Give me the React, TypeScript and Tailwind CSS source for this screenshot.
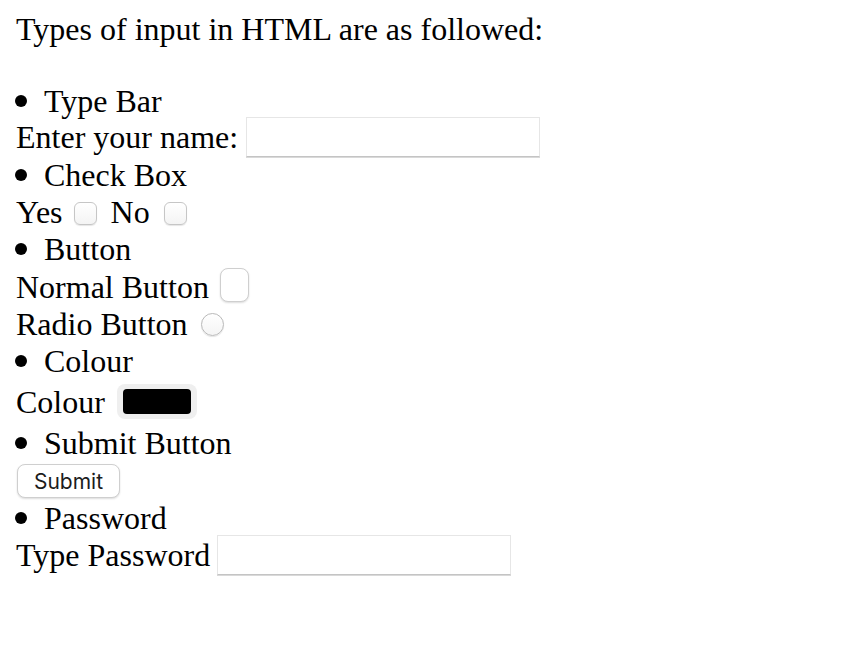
import React from 'react';

const serif = { fontFamily: '"Liberation Serif", "Times New Roman", serif' };

// Safari-ish form controls, drawn at 2x
const textInput =
  'h-[40px] w-[294px] shrink-0 bg-white border border-[#e6e6e6] border-b-[#c4c4c4] shadow-[0_1px_0_#d9d9d9] outline-none';
const checkbox =
  'h-[23px] w-[23px] shrink-0 rounded-[6px] border border-[#c6c6c6] bg-gradient-to-b from-white to-[#f4f4f4] shadow-[0_1px_1px_rgba(0,0,0,0.1)]';

const Bullet: React.FC<{ label: string }> = ({ label }) => (
  <div className="flex h-[37px] items-center">
    <span className="ml-[15px] -mt-[1px] h-[12px] w-[12px] rounded-full bg-black" />
    <span className="ml-[17px]">{label}</span>
  </div>
);

export default function App() {
  return (
    <div className="min-h-screen bg-white pt-[11px] text-[32px] leading-[37px] text-black" style={serif}>
      <div className="flex h-[37px] items-center pl-[16px]">Types of input in HTML are as followed:</div>
      <div className="h-[35px]" />

      <Bullet label="Type Bar" />
      <div className="flex h-[37px] items-center pl-[16px]">
        <span className="-mt-[2px]">Enter your name:</span>
        <input type="text" className={`ml-[8px] -mt-[3px] ${textInput}`} />
      </div>

      <Bullet label="Check Box" />
      <div className="flex h-[37px] items-center pl-[16px]">
        <span>Yes</span>
        <span className={`ml-[11px] mt-[2px] ${checkbox}`} />
        <span className="ml-[14px]">No</span>
        <span className={`ml-[14px] mt-[2px] ${checkbox}`} />
      </div>

      <Bullet label="Button" />
      <div className="flex h-[38px] items-center pl-[16px]">
        <span>Normal Button</span>
        <button className="ml-[11px] -mt-[4px] h-[34px] w-[29px] shrink-0 rounded-[8px] border border-[#cfcfcf] bg-white shadow-[0_1px_2px_rgba(0,0,0,0.14)]" />
      </div>
      <div className="flex h-[37px] items-center pl-[16px]">
        <span>Radio Button</span>
        <span className="ml-[13px] h-[23px] w-[23px] shrink-0 rounded-full border border-[#b9b9b9] bg-gradient-to-b from-white to-[#f4f4f4] shadow-[0_1px_1px_rgba(0,0,0,0.1)]" />
      </div>

      <Bullet label="Colour" />
      <div className="flex h-[45px] items-center pl-[16px]">
        <span>Colour</span>
        <span className="ml-[12px] -mt-[2px] flex h-[35px] w-[80px] shrink-0 items-center justify-center rounded-[8px] bg-[#efefef]">
          <span className="h-[25px] w-[68px] rounded-[4px] bg-black" />
        </span>
      </div>

      <Bullet label="Submit Button" />
      <div className="flex h-[38px] items-center pl-[17px]">
        <button
          className="h-[34px] w-[103px] shrink-0 rounded-[8px] border border-[#cfcfcf] bg-white text-[21px] leading-none text-[#1c1c1c] shadow-[0_1px_2px_rgba(0,0,0,0.14)]"
          style={{ fontFamily: 'Inter, "Liberation Sans", sans-serif' }}
        >
          Submit
        </button>
      </div>

      <Bullet label="Password" />
      <div className="flex h-[37px] items-center pl-[16px]">
        <span className="-mt-[1px]">Type Password</span>
        <input type="password" className={`ml-[7px] -mt-[2px] ${textInput}`} />
      </div>
    </div>
  );
}
